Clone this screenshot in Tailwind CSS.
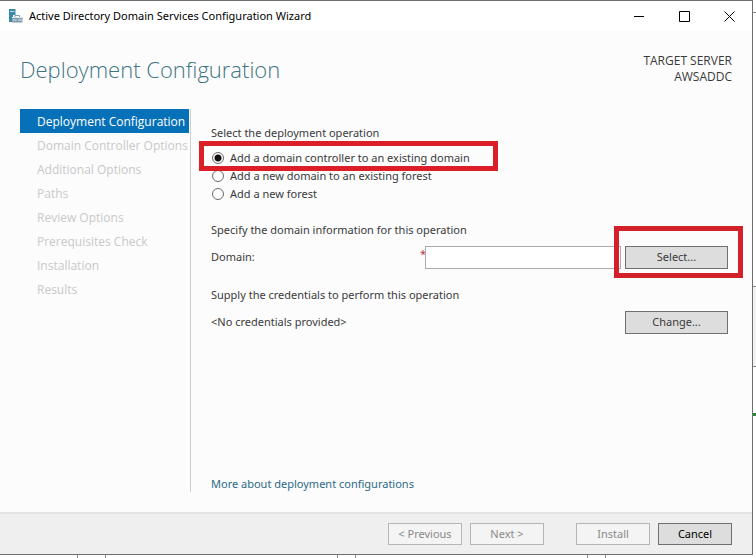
<!DOCTYPE html>
<html lang="en">
<head>
<meta charset="utf-8">
<meta name="viewport" content="width=device-width, initial-scale=1">
<title>Active Directory Domain Services Configuration Wizard</title>
<script src="https://cdn.jsdelivr.net/npm/@tailwindcss/browser@4"></script>
</head>
<body class="relative flex min-h-screen flex-col bg-white pr-[3px] pb-[3px] font-['Noto_Sans','Open_Sans',sans-serif] text-[11px] text-[#3a3a3a]">
  <!-- Edges of the windows lying behind the wizard -->
  <div class="absolute inset-y-0 right-0 w-[3px]" aria-hidden="true">
    <span class="absolute top-3 h-px w-full bg-[#8a8a8a]"></span>
    <span class="absolute top-[286px] h-px w-full bg-[#8a8a8a]"></span>
    <span class="absolute top-[287px] h-[80px] w-full border-b border-[#8a8a8a] bg-[#f3f3f3]"></span>
    <span class="absolute top-[413px] h-[3px] w-full bg-[#2c8a35]"></span>
  </div>
  <div class="absolute inset-x-0 bottom-0 h-[3px]" aria-hidden="true">
    <span class="absolute left-[77px] h-full w-[29px] border-x border-[#8a8a8a]"></span>
    <span class="absolute left-[337px] h-full w-[19px] border-x border-[#8a8a8a]"></span>
    <span class="absolute left-[587px] h-full w-[19px] border-x border-[#8a8a8a]"></span>
  </div>

  <main class="flex grow flex-col border-t border-r border-b border-[#6e6e6e] bg-[#fcfcfc]">
    <header class="flex h-[30px] items-center bg-white pl-2 text-black">
      <svg class="size-4" viewBox="0 0 16 16" aria-hidden="true">
        <path d="M1 1h6.500v6H5v7H1z" fill="#3a87a6"/>
        <path d="M2 3.500h4.500" stroke="#b9dbe8"/>
        <path d="M4 9.500h10.500v5H4z" fill="#7f9dac"/>
        <path d="M7 9.500V7.500h4.500v2" fill="none" stroke="#7f9dac"/>
        <path d="M4 9.500h10.500M4.500 12h4M10 12h4" fill="none" stroke="#d9e5ea"/>
      </svg>
      <h1 class="ml-[5px] grow">Active Directory Domain Services Configuration Wizard</h1>
      <div class="flex">
        <button type="button" aria-label="Minimize" class="flex h-7 w-[45px] items-center justify-center"><svg class="size-[11px]" viewBox="0 0 11 11"><path d="M0 5.5h10" stroke="#000"/></svg></button>
        <button type="button" aria-label="Maximize" class="flex h-7 w-[45px] items-center justify-center"><svg class="size-[11px]" viewBox="0 0 11 11"><path d="M.5.5h10v10H.5z" fill="none" stroke="#000"/></svg></button>
        <button type="button" aria-label="Close" class="flex h-7 w-[45px] items-center justify-center"><svg class="size-[11px]" viewBox="0 0 11 11"><path d="M.5.5l10 10M10.500.5l-10 10" fill="none" stroke="#000"/></svg></button>
      </div>
    </header>

    <div class="flex items-start justify-between pt-[22px] pr-5 pl-5">
      <h2 class="font-['Open_Sans',sans-serif] text-[22px] leading-8 font-light text-[#3f7482]">Deployment Configuration</h2>
      <p class="text-right font-['Open_Sans',sans-serif] text-xs leading-4">TARGET SERVER<br>AWSADDC</p>
    </div>

    <div class="mt-6 mb-5 flex grow pl-5">
      <nav class="w-[171px] shrink-0 border-r border-[#cfcfcf] pr-px whitespace-nowrap">
        <ol class="font-['Open_Sans',sans-serif] text-xs leading-[25px] text-[#c9c9c9]">
          <li aria-current="step" class="h-6 bg-[#0671b8] pl-[17px] text-white">Deployment Configuration</li>
          <li class="h-6 pl-[17px]">Domain Controller Options</li>
          <li class="h-6 pl-[17px]">Additional Options</li>
          <li class="h-6 pl-[17px]">Paths</li>
          <li class="h-6 pl-[17px]">Review Options</li>
          <li class="h-6 pl-[17px]">Prerequisites Check</li>
          <li class="h-6 pl-[17px]">Installation</li>
          <li class="h-6 pl-[17px]">Results</li>
        </ol>
      </nav>

      <form class="flex grow flex-col pt-4 pr-6 pl-5">
        <fieldset>
          <legend class="leading-4">Select the deployment operation</legend>
          <div class="relative mt-2 flex flex-col items-start">
            <label class="flex items-center gap-1.5 pl-px leading-[18px]"><input type="radio" name="operation" checked class="size-3 appearance-none rounded-full border border-[#6b6b6b] bg-[radial-gradient(circle,#111_3px,white_4px)]">Add a domain controller to an existing domain</label>
            <label class="flex items-center gap-1.5 pl-px leading-[18px]"><input type="radio" name="operation" class="size-3 appearance-none rounded-full border border-[#6b6b6b] bg-white">Add a new domain to an existing forest</label>
            <label class="flex items-center gap-1.5 pl-px leading-[18px]"><input type="radio" name="operation" class="size-3 appearance-none rounded-full border border-[#6b6b6b] bg-white">Add a new forest</label>
            <span class="pointer-events-none absolute -top-2 -left-3 h-[30px] w-[299px] border-[5px] border-[#dc1e28]"></span>
          </div>
        </fieldset>

        <h3 class="mt-[19px] leading-4">Specify the domain information for this operation</h3>
        <div class="mt-2 flex h-[23px] items-center">
          <label for="domain" class="w-[209px] shrink-0">Domain:</label>
          <span class="h-full w-[5px] leading-4 text-[#c0303c]" aria-hidden="true">*</span>
          <input id="domain" type="text" required class="h-full min-w-0 grow border border-[#ababab] bg-white px-1">
          <div class="relative ml-1 h-full w-[103px] shrink-0">
            <button type="button" class="size-full border border-[#707070] bg-[#dddddd]">Select...</button>
            <span class="pointer-events-none absolute -top-5 -right-[15px] h-[52px] w-[129px] border-[5px] border-[#d3202b]"></span>
          </div>
        </div>

        <h3 class="mt-[18px] leading-4">Supply the credentials to perform this operation</h3>
        <div class="mt-2 flex h-[23px] items-center justify-between">
          <span>&lt;No credentials provided&gt;</span>
          <button type="button" class="h-full w-[103px] border border-[#707070] bg-[#dddddd]">Change...</button>
        </div>

        <a href="#" class="mt-auto self-start leading-4 text-[#2b6a86]">More about deployment configurations</a>
      </form>
    </div>

    <footer class="flex justify-end border-t-2 border-[#e3e3e3] bg-[#efefef] pt-[9px] pr-5 pb-[9px]">
      <button type="button" disabled class="h-[22px] w-[74px] border border-[#b5b5b5] bg-[#f4f4f4] text-[#8a8a8a]">&lt; Previous</button>
      <button type="button" disabled class="ml-2 h-[22px] w-[74px] border border-[#b5b5b5] bg-[#f4f4f4] text-[#8a8a8a]">Next &gt;</button>
      <button type="button" disabled class="ml-8 h-[22px] w-[74px] border border-[#b5b5b5] bg-[#f4f4f4] text-[#8a8a8a]">Install</button>
      <button type="button" class="ml-2 h-[22px] w-[74px] border border-[#707070] bg-[#dddddd] text-black">Cancel</button>
    </footer>
  </main>
</body>
</html>
